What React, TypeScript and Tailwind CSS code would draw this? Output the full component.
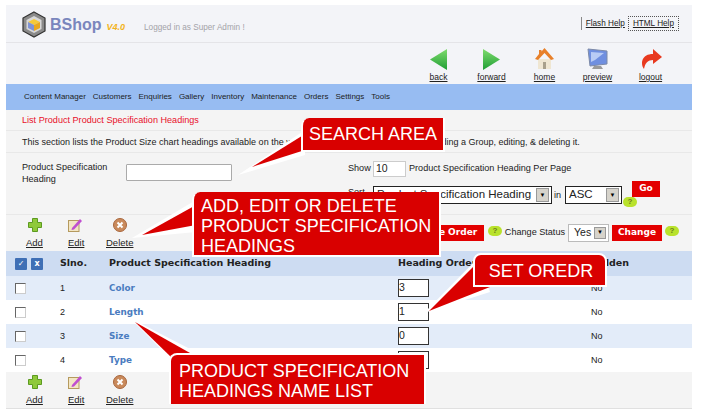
import React from "react";

const navItems = ["Content Manager", "Customers", "Enquiries", "Gallery", "Inventory", "Maintenance", "Orders", "Settings", "Tools"];

const rows = [
  { id: 1, name: "Color", order: "3" },
  { id: 2, name: "Length", order: "1" },
  { id: 3, name: "Size", order: "0" },
  { id: 4, name: "Type", order: "" },
];

const tableCols = "grid grid-cols-[45px_49px_289px_193px_1fr] items-center pl-[9px]";

const Logo = () => (
  <svg width="24" height="27" viewBox="0 0 24 27" className="shrink-0">
    <path d="M12 1 L23 7 V20 L12 26 L1 20 V7 Z" fill="#8a8a8a" stroke="#333" strokeWidth="1.2" />
    <path d="M12 5 L19.5 9 V18 L12 22 L4.5 18 V9 Z" fill="#d8d8d8" />
    <path d="M12 8 L18 11 L12 14 L6 11 Z" fill="#f5c93a" />
    <path d="M6 11 L12 14 V20 L6 17 Z" fill="#7f93d6" />
    <path d="M18 11 L12 14 V20 L18 17 Z" fill="#e9a720" />
  </svg>
);

const BackIcon = () => (
  <svg width="18" height="21" viewBox="0 0 18 21"><defs><linearGradient id="gb" x1="0" x2="0" y1="0" y2="1"><stop offset="0" stopColor="#7fdc6e" /><stop offset="1" stopColor="#1f9e35" /></linearGradient></defs><path d="M0 10.5 L17 0 V21 Z" fill="url(#gb)" /></svg>
);

const ForwardIcon = () => (
  <svg width="18" height="21" viewBox="0 0 18 21"><defs><linearGradient id="gf" x1="0" x2="0" y1="0" y2="1"><stop offset="0" stopColor="#7fdc6e" /><stop offset="1" stopColor="#1f9e35" /></linearGradient></defs><path d="M17 10.5 L0 0 V21 Z" fill="url(#gf)" /></svg>
);

const HomeIcon = () => (
  <svg width="19" height="22" viewBox="0 0 19 22">
    <path d="M3 11 H16 V21 H3 Z" fill="#efe6d2" />
    <path d="M9.5 0 L19 11 L16 12 L9.5 5 L3 12 L0 11 L4 6 V2 H6.5 V3.5 Z" fill="#e8802a" />
    <path d="M8 14 H11 V21 H8 Z" fill="#a9a08c" />
  </svg>
);

const PreviewIcon = () => (
  <svg width="21" height="22" viewBox="0 0 21 22">
    <path d="M1 1 L20 3 V16 L3 18 Z" fill="#6f8fe0" stroke="#7d8aa8" />
    <path d="M4 4 L17 5 L8 12 L4 14 Z" fill="#b9ccf5" />
    <path d="M7 18 H14 L16 21 H5 Z" fill="#9a9a9a" />
  </svg>
);

const LogoutIcon = () => (
  <svg width="22" height="21" viewBox="0 0 22 21">
    <path d="M13 0 L22 8 L13 15 V11 C8 11 5 14 4 20 C0 14 2 5 13 5 Z" fill="#e8391f" />
  </svg>
);

const AddIcon = () => (
  <svg width="14" height="14" viewBox="0 0 14 14"><path d="M4.5 0.5 H9.5 V4.5 H13.5 V9.5 H9.5 V13.5 H4.5 V9.5 H0.5 V4.5 H4.5 Z" fill="#8fc93a" stroke="#5c9a20" /></svg>
);

const EditIcon = () => (
  <svg width="14" height="14" viewBox="0 0 14 14">
    <rect x="0.5" y="2.5" width="10.5" height="11" fill="#f3e6c4" stroke="#b59a5e" />
    <path d="M4 10 L12 1 L14 3 L6 11.5 L3.5 12 Z" fill="#c04fd0" />
  </svg>
);

const DeleteIcon = () => (
  <svg width="14" height="14" viewBox="0 0 14 14">
    <circle cx="7" cy="7" r="6.5" fill="#c98a5c" stroke="#a8663c" />
    <path d="M4.5 4.5 L9.5 9.5 M9.5 4.5 L4.5 9.5" stroke="#fff" strokeWidth="2" />
  </svg>
);

const HelpBubble = () => (
  <span className="inline-flex h-[10px] w-[14px] items-center justify-center rounded-full bg-[#b9e22c] text-[8px] font-bold leading-none text-[#6b7a1e]">?</span>
);

const RedButton = ({ children, className }: { children: React.ReactNode; className: string }) => (
  <span className={`flex items-center justify-center bg-[#e30000] font-['DejaVu_Sans'] text-[9px] font-bold text-white ${className}`}>
    {children}
  </span>
);

const FakeSelect = ({ value, className }: { value: string; className: string }) => (
  <div className={`flex items-center justify-between border border-[#222] bg-white pl-[3px] pr-[2px] ${className}`}>
    <span className="whitespace-nowrap text-[11.5px] text-[#222]">{value}</span>
    <span className="flex h-[14px] w-[13px] items-center justify-center border border-[#999] bg-[#d6d3cb] text-[6px] text-black">▼</span>
  </div>
);

const Toolbar = () => (
  <div className="flex w-[140px] pl-[16px] text-[9.5px]">
    <div className="flex w-[42px] flex-col items-start gap-[6px] pl-[4px]">
      <span className="flex pl-[2px]"><AddIcon /></span>
      <a className="leading-none text-[#222] underline">Add</a>
    </div>
    <div className="flex w-[42px] flex-col items-start gap-[6px] pl-[4px]">
      <EditIcon />
      <a className="leading-none text-[#222] underline">Edit</a>
    </div>
    <div className="flex flex-col items-center gap-[6px]">
      <DeleteIcon />
      <a className="leading-none text-[#222] underline">Delete</a>
    </div>
  </div>
);

const App = () => {
  return (
    <div className="relative h-[420px] w-[702px] overflow-hidden bg-white font-['Liberation_Sans',Arial,sans-serif]">
      <div className="ml-[6px] mt-[5px] w-[686px] bg-[#f4f4f4]">
        {/* Header */}
        <div className="h-[38px] bg-[#f3f4f8] border-b border-[#e4e4e8] flex items-start pl-[16px] pt-[6px]">
          <Logo />
          <span className="ml-[4px] mt-[2px] text-[16px] font-bold leading-[24px] text-[#7a86bd]">BShop</span>
          <span className="ml-[5px] mt-[10px] text-[9px] font-bold italic leading-[12px] text-[#f2b31c]">V4.0</span>
          <span className="ml-[19px] mt-[11px] text-[8.2px] leading-[12px] text-[#a3a3a8]">Logged in as Super Admin !</span>
          <div className="ml-auto mr-[13px] mt-[5px] flex items-center">
            <span className="border-l border-[#888] pl-[4px] pr-[3px] text-[8.2px] leading-[13px] text-[#222] underline">Flash Help</span>
            <span className="border border-dotted border-[#555] px-[4px] text-[8.2px] leading-[13px] text-[#222] underline">HTML Help</span>
          </div>
        </div>

        {/* Icon bar */}
        <div className="flex h-[41px] justify-end bg-[#f3f4f8] pr-[15px] pt-[5px]">
          {[
            { label: "back", icon: <BackIcon /> },
            { label: "forward", icon: <ForwardIcon /> },
            { label: "home", icon: <HomeIcon /> },
            { label: "preview", icon: <PreviewIcon /> },
            { label: "logout", icon: <LogoutIcon /> },
          ].map((item) => (
            <div key={item.label} className="flex w-[53px] flex-col items-center">
              <div className="flex h-[22px] items-center">{item.icon}</div>
              <a className="mt-[2px] text-[8.5px] leading-[11px] text-[#222] underline">{item.label}</a>
            </div>
          ))}
        </div>

        {/* Nav */}
        <div className="flex h-[26px] items-center gap-[7px] bg-[#97bcf2] pl-[18px] text-[8px] text-[#1c1c1c]">
          {navItems.map((item) => (
            <span key={item}>{item}</span>
          ))}
        </div>

        {/* Title */}
        <div className="flex h-[21px] items-center border-b border-[#e8e8e8] pl-[16px] pt-[1px] text-[9.1px] text-[#e8102a]">
          List Product Product Specification Headings
        </div>

        {/* Description */}
        <div className="flex h-[22px] items-center border-b border-[#e8e8e8] pl-[16px] pt-[2px] text-[9px] whitespace-nowrap text-[#222]">
          This section lists the Product Size chart headings available on the website. This section also allows for adding a Group, editing, &amp; deleting it.
        </div>

        {/* Search form */}
        <div className="flex h-[62px] border-b border-[#e8e8e8]">
          <div className="ml-[16px] mt-[8px] w-[104px] text-[9.1px] leading-[12px] text-[#222]">
            Product Specification<br />Heading
          </div>
          <div className="mt-[11px] h-[17px] w-[106px] rounded-[1px] border border-[#aaa] bg-white" />
          <div className="ml-[116px] mt-[8px] w-[330px]">
            <div className="flex h-[16px] items-center text-[9.1px] text-[#222]">
              <span className="w-[25px]">Show</span>
              <span className="flex h-[16px] w-[33px] items-center border border-[#ccc] bg-white pl-[2px] text-[10.5px]">10</span>
              <span className="ml-[3px]">Product Specification Heading Per Page</span>
            </div>
            <div className="mt-[9px] flex items-start text-[9.1px] text-[#222]">
              <span className="w-[25px]">Sort</span>
              <FakeSelect value="Product Specification Heading" className="h-[18px] w-[179px]" />
              <span className="ml-[2px] mt-[3px] w-[11px]">in</span>
              <FakeSelect value="ASC" className="h-[18px] w-[57px]" />
              <div className="relative">
                <RedButton className="ml-[10px] -mt-[5px] h-[16px] w-[28px]">Go</RedButton>
                <span className="absolute left-[1px] top-[11px] flex"><HelpBubble /></span>
              </div>
            </div>
          </div>
        </div>

        {/* Top toolbar */}
        <div className="flex h-[36px] items-center">
          <Toolbar />
          <div className="ml-auto mr-[13px] mt-[-1px] flex items-center text-[9.1px] text-[#222]">
            <RedButton className="h-[16px] w-[70px]">Save Order</RedButton>
            <span className="ml-[4px] -mt-[4px] flex"><HelpBubble /></span>
            <span className="ml-[3px]">Change Status</span>
            <div className="ml-[3px] flex h-[18px] w-[41px] items-center justify-between border border-[#bbb] bg-white pl-[5px] pr-[2px] text-[10.5px]">
              Yes
              <span className="flex h-[12px] w-[12px] items-center justify-center border border-[#999] bg-[#d6d3cb] text-[6px] text-black">▼</span>
            </div>
            <RedButton className="ml-[3px] h-[16px] w-[50px]">Change</RedButton>
            <span className="ml-[3px] -mt-[4px] flex"><HelpBubble /></span>
          </div>
        </div>

        {/* Table */}
        <div className={`${tableCols} h-[25px] bg-[#cddcf2] font-['DejaVu_Sans'] text-[9.5px] font-bold text-[#222]`}>
          <div className="flex gap-[4px]">
            <span className="flex h-[12px] w-[12px] items-center justify-center rounded-[1px] bg-[#3f6fb5] text-[8px] leading-none text-white">✓</span>
            <span className="flex h-[12px] w-[12px] items-center justify-center rounded-[1px] bg-[#3f6fb5] text-[8px] leading-none text-white">x</span>
          </div>
          <span>Slno.</span>
          <span>Product Specification Heading</span>
          <span>Heading Order</span>
          <span>Hidden</span>
        </div>
        {rows.map((row) => (
          <div key={row.id} className={`${tableCols} h-[24px] text-[9px] text-[#222] ${row.id % 2 === 1 ? "bg-[#e3ecf9]" : "bg-white"}`}>
            <span className="h-[11px] w-[11px] border border-[#666] border-b-[#ccc] border-r-[#ccc] bg-white" />
            <span className="pt-[1px]">{row.id}</span>
            <span className="pt-[1px] font-['DejaVu_Sans'] text-[8.8px] font-bold text-[#4a7cc0]">{row.name}</span>
            <span className="flex h-[18px] w-[31px] items-center border border-[#333] bg-white text-[10.5px]">{row.order}</span>
            <span className="pt-[1px]">No</span>
          </div>
        ))}

        {/* Bottom toolbar */}
        <div className="flex h-[37px] items-center border-b border-[#e0e0e0]">
          <Toolbar />
        </div>
      </div>

      {/* Callouts */}
      <svg className="absolute left-0 top-0" width="702" height="420" viewBox="0 0 702 420">
        <path d="M305 130 L238 175 L305 155 Z" fill="#fff" />
        <path d="M305 134 L252 167 L305 150 Z" fill="#d90000" />
        <path d="M196 200 L132 238 L196 232 Z" fill="#fff" />
        <path d="M196 205 L142 235 L196 225 Z" fill="#d90000" />
        <path d="M478 258 L424 313 L490 292 Z" fill="#fff" />
        <path d="M478 262 L429 311 L490 287 Z" fill="#d90000" />
        <path d="M168 356 L130 318 L190 349 Z" fill="#fff" />
        <path d="M172 358 L135 322 L190 353 L190 358 Z" fill="#d90000" />
      </svg>
      <div className="absolute left-[301px] top-[118px] flex h-[34px] w-[144px] items-center rounded-tl-[8px] border-b-2 border-l-2 border-r-2 border-white bg-[#d90000] pl-[6px] text-[18px] leading-none text-white">
        SEARCH AREA
      </div>
      <div className="absolute left-[192px] top-[192px] h-[65px] w-[249px] rounded-tl-[8px] border-2 border-t-0 border-white bg-[#d90000] pl-[7px] pt-[4px] text-[18px] leading-[20px] text-white">
        ADD, EDIT OR DELETE<br />PRODUCT SPECIFICATION<br />HEADINGS
      </div>
      <div className="absolute left-[473px] top-[253px] flex h-[34px] w-[134px] items-center justify-center rounded-t-[8px] border-2 border-white bg-[#d90000] pl-[2px] pt-[1px] text-[18px] leading-none text-white">
        SET OREDR
      </div>
      <div className="absolute left-[169px] top-[353px] h-[51px] w-[257px] rounded-tl-[8px] border-2 border-b-0 border-white bg-[#d90000] pl-[8px] pt-[6px] text-[18px] leading-[20px] text-white">
        PRODUCT SPECIFICATION<br />HEADINGS NAME LIST
      </div>
    </div>
  );
};

export default App;
